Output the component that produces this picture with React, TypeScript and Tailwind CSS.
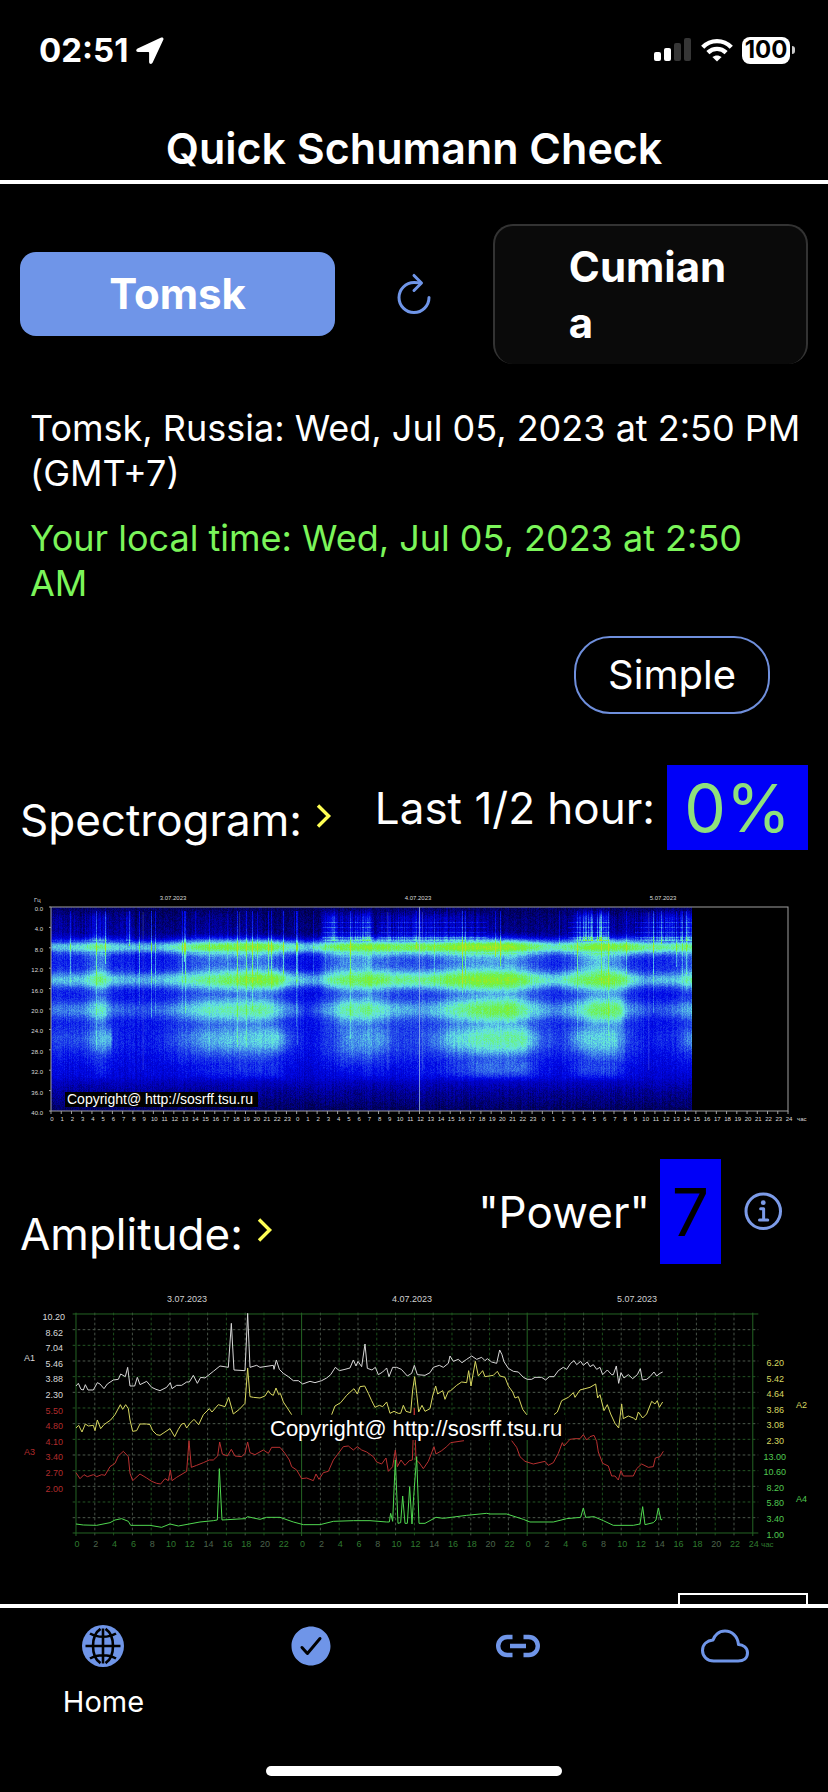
import { IoCheckmarkCircle, IoCloudOutline, IoInformationCircleOutline, IoRefreshOutline } from 'react-icons/io5';

type Knots = [number, number][];
type Band = { freq: number; spread: number; knots: Knots };

// spectrogram plot: 72 hours across, 0-40 Hz down
const PLOT = { x: 31, y: 27, w: 737, h: 204 };
const HOUR = PLOT.w / 72;
const HERTZ = PLOT.h / 40;
const LAST_HOUR = 62.7;

const BANDS: Band[] = [
  {
    freq: 7.8,
    spread: 1,
    knots: [[0, 0.7], [2, 0.76], [4.9, 0.9], [6, 0.77], [8, 0.72], [10, 0.71], [12, 0.82], [15, 0.95], [21.5, 0.97], [23, 0.84], [25, 0.74], [27, 0.87], [28, 0.95], [31, 0.99], [34, 0.94], [37, 0.95], [40, 1.02], [45, 1.03], [47, 0.92], [49, 0.82], [51, 0.9], [53, 1], [56, 0.96], [58, 0.89], [60, 0.86], [63, 0.9]],
  },
  {
    freq: 14.2,
    spread: 1.25,
    knots: [[0, 0.7], [3, 0.75], [4.9, 0.92], [6, 0.74], [9, 0.68], [12, 0.77], [15, 0.88], [19, 0.96], [22, 0.98], [23.5, 0.76], [26, 0.68], [27.5, 0.88], [31, 0.97], [33, 0.9], [36, 0.86], [39, 0.96], [42, 1], [45, 1], [47, 0.87], [49, 0.76], [51, 0.88], [54, 0.99], [55.5, 0.95], [56.5, 0.82], [58, 0.7], [61, 0.74], [63, 0.9]],
  },
  {
    freq: 20.1,
    spread: 1.5,
    knots: [[0, 0.6], [3, 0.65], [5, 0.84], [6, 0.6], [9, 0.54], [12, 0.66], [15, 0.82], [21, 0.86], [23, 0.66], [25, 0.5], [27, 0.66], [28.5, 0.84], [31, 0.88], [33, 0.75], [36, 0.66], [40, 0.87], [42, 0.93], [45, 0.96], [47, 0.78], [49, 0.64], [51, 0.72], [53, 0.92], [55.5, 0.92], [56.2, 0.68], [59, 0.54], [61, 0.62], [63, 0.76]],
  },
  {
    freq: 25.8,
    spread: 1.8,
    knots: [[0, 0.52], [3, 0.55], [5, 0.74], [5.8, 0.7], [6, 0.48], [9, 0.42], [12, 0.54], [15, 0.7], [22, 0.77], [23.5, 0.52], [26, 0.38], [29, 0.67], [32, 0.68], [34, 0.52], [36, 0.52], [39, 0.74], [42, 0.84], [46, 0.86], [48, 0.57], [50, 0.52], [52, 0.74], [55, 0.77], [56.5, 0.52], [58, 0.44], [61, 0.5], [63, 0.72]],
  },
  {
    freq: 31.4,
    spread: 1.9,
    knots: [[0, 0.38], [4, 0.42], [5, 0.5], [6, 0.38], [12, 0.4], [16, 0.48], [22, 0.49], [24, 0.34], [27, 0.38], [31, 0.46], [34, 0.4], [38, 0.46], [42, 0.6], [46, 0.6], [48, 0.42], [50, 0.4], [52, 0.53], [55, 0.53], [56.5, 0.4], [60, 0.36], [63, 0.38]],
  },
];

const FLOOR: Knots = [[0, 0.16], [5, 0.22], [7, 0.34], [10, 0.42], [27, 0.44], [30, 0.4], [33, 0.36], [36, 0.26], [40, 0.16]];

// how busy the 0-6 Hz part is
const HUM: Knots = [[0, 0.06], [3, 0.08], [5, 0.22], [6, 0.02], [7.5, 0.16], [8.2, 0], [12, 0.02], [16, 0.07], [17, 0.04], [24, 0], [26, 0], [27.5, 0.28], [28.5, 0.16], [31, 0.28], [31.6, 0.04], [33, 0.18], [37, 0.16], [42, 0.1], [44, 0.02], [49, 0.02], [50.9, 0.1], [52, 0.32], [54, 0.38], [54.6, 0.06], [57, 0.08], [59, 0.2], [62, 0.24], [63, 0.2]];

const RAMP: [number, number, number, number][] = [
  [0, 0, 0, 20],
  [0.15, 0, 0, 84],
  [0.3, 0, 0, 180],
  [0.42, 0, 8, 232],
  [0.55, 36, 76, 232],
  [0.68, 76, 160, 232],
  [0.78, 100, 228, 224],
  [0.87, 104, 240, 150],
  [0.95, 112, 240, 76],
  [1, 128, 240, 48],
  [1.1, 190, 224, 30],
];

const lerp = (knots: Knots, at: number) => {
  for (let i = 1; i < knots.length; i++) {
    const [x1, y1] = knots[i];
    if (at <= x1) {
      const [x0, y0] = knots[i - 1];
      return y0 + ((y1 - y0) * (at - x0)) / (x1 - x0);
    }
  }
  return knots[knots.length - 1][1];
};

const hash = (a: number, b: number) => {
  const s = Math.sin(a * 127.1 + b * 311.7) * 43758.5453;
  return s - Math.floor(s);
};

const rampColor = (v: number) => {
  for (let i = 1; i < RAMP.length; i++) {
    if (v <= RAMP[i][0]) {
      const [p, ...a] = RAMP[i - 1];
      const [q, ...b] = RAMP[i];
      const t = (v - p) / (q - p);
      return `rgb(${a.map((c, n) => Math.round(c + (b[n] - c) * t)).join(',')})`;
    }
  }
  return 'rgb(190,224,30)';
};

// one path per colour step keeps the node count small
const LEVELS = 44;
function buildSpectrogram() {
  const paths: string[] = Array.from({ length: LEVELS + 1 }, () => '');
  const cols = Math.floor(LAST_HOUR * HOUR);
  for (let c = 0; c < cols; c++) {
    const hour = c / HOUR;
    const jitter = (hash(c, 1) - 0.5) * 0.06;
    const strong = hash(c, 2) > 0.93 ? 0.1 + hash(c, 3) * 0.14 : 0;
    const reach = 5 + hash(c, 4) * 26;
    const hum = lerp(HUM, hour);
    const levels = BANDS.map((b) => lerp(b.knots, hour));
    const activity = levels[2];
    for (let r = 0; r < PLOT.h; r += 1) {
      const freq = r / HERTZ;
      let v = lerp(FLOOR, freq);
      if (freq > 9 && freq < 34) v += Math.max(0, activity - 0.56) * (freq < 28 ? 0.6 : 0.6 - (freq - 28) * 0.1);
      if (freq > 9 && freq < 13) v += hum * 0.25;
      const bg = v;
      BANDS.forEach((b, i) => {
        const d = Math.abs(freq - b.freq) / (b.spread * (0.75 + Math.max(0, levels[i] - 0.6)));
        v = Math.max(v, bg + (levels[i] - bg) * Math.exp(-Math.pow(d, 2.3) / 2));
      });
      if (freq < 6.6) {
        v += hum * (0.35 + hash(c, 7) * 0.9) * Math.min(1, freq / 2);
        if (hour > 26 && hum > 0.08 && r % 5 === 0 && r > 10) v += 0.13;
      }
      if (freq > 0.6 && freq < reach) v += strong * (freq < 13 ? 1.1 : 0.5);
      v += jitter + (hash(c, r + 11) - 0.5) * 0.09;
      if (freq > 34) v = Math.min(v, 0.36);
      const level = Math.max(0, Math.min(LEVELS, Math.round((v / 1.1) * LEVELS)));
      paths[level] += `M${PLOT.x + c} ${PLOT.y + r}h1v1h-1z`;
    }
  }
  return paths.map((d, i) => ({ d, fill: rampColor((i / LEVELS) * 1.1) }));
}

const SPECTRUM = buildSpectrogram();

function Spectrogram() {
  return (
    <svg viewBox="0 0 788 260" className="block w-full font-['Liberation_Sans',sans-serif]" role="img" aria-label="Spectrogram">
      <g shapeRendering="crispEdges">
        {SPECTRUM.map((p, i) => (
          <path key={i} d={p.d} fill={p.fill} />
        ))}
      </g>
      {[32.9, 36, 36.3, 9, 18.4, 58.4].map((h) => (
        <line key={h} x1={PLOT.x + h * HOUR} x2={PLOT.x + h * HOUR} y1={h === 36 ? 27 : 32} y2={h === 36 ? 231 : 190} stroke="#a8c8e8" strokeWidth={h === 36 ? 1 : 0.6} opacity={h === 36 ? 0.7 : 0.4} />
      ))}
      <rect x={PLOT.x} y={PLOT.y} width={PLOT.w} height={PLOT.h} fill="none" stroke="#a0a0a0" />
      <rect x="45" y="212" width="193" height="15" fill="#000" />
      <text x="47" y="224" fontSize="14" fill="#fff">
        Copyright@ http://sosrff.tsu.ru
      </text>
      <g fill="#dcdcdc" fontSize="6">
        <text x="14" y="22">
          Гц
        </text>
        {Array.from({ length: 11 }, (_, i) => (
          <g key={i}>
            <text x="23" y={PLOT.y + 4 + i * 4 * HERTZ} textAnchor="end">
              {(i * 4).toFixed(1)}
            </text>
            <path d={`M${PLOT.x - 2} ${PLOT.y + i * 4 * HERTZ}h2`} stroke="#a0a0a0" />
          </g>
        ))}
        {Array.from({ length: 73 }, (_, i) => (
          <g key={i}>
            <text x={PLOT.x + 1 + i * HOUR} y="241" textAnchor="middle">
              {i === 72 ? 24 : i % 24}
            </text>
            <path d={`M${PLOT.x + i * HOUR} 231v3`} stroke="#a0a0a0" />
          </g>
        ))}
        <text x="777" y="241">
          час
        </text>
        {['3.07.2023', '4.07.2023', '5.07.2023'].map((day, i) => (
          <text key={day} x={153 + i * 245} y="20" textAnchor="middle">
            {day}
          </text>
        ))}
      </g>
    </svg>
  );
}

// recorded traces, three units to a pixel
const A1 =
  'M228 318 235 310 243 328 250 330 256 314 264 330 280 330 292 308 300 312 312 326 322 312 340 300 355 298 362 282 376 290 383 262 390 318 404 318 412 292 420 314 440 304 455 322 468 328 480 332 500 322 511 308 516 326 530 316 545 316 560 306 568 306 580 286 592 310 602 292 615 294 640 274 660 258 685 262 694 130 702 270 735 272 743 100 750 262 770 256 780 262 820 256 822 268 829 240 838 268 850 280 865 290 880 302 895 302 908 312 930 304 945 308 965 302 980 294 992 284 1006 262 1018 272 1035 268 1050 264 1060 240 1068 258 1074 244 1085 260 1095 192 1102 265 1116 270 1126 262 1135 284 1148 276 1160 264 1167 290 1178 262 1190 262 1204 268 1222 288 1235 280 1243 256 1252 284 1275 286 1290 278 1300 262 1318 256 1330 262 1345 250 1350 228 1360 244 1375 238 1386 248 1400 238 1415 228 1430 238 1445 232 1455 242 1462 236 1475 246 1490 250 1499 210 1506 224 1512 245 1525 265 1540 274 1555 276 1570 292 1582 298 1595 298 1605 292 1625 292 1637 300 1648 290 1662 290 1675 272 1690 262 1700 268 1712 250 1722 242 1730 254 1742 244 1750 256 1762 246 1770 260 1780 254 1790 268 1800 262 1808 284 1822 270 1835 284 1840 284 1849 258 1856 310 1863 278 1872 294 1885 284 1898 296 1912 284 1921 266 1927 300 1940 298 1950 290 1962 276 1970 288 1980 280 1988 276';
const A2 =
  'M228 444 236 436 246 456 256 432 265 438 280 436 285 452 292 420 302 446 312 434 332 420 345 404 361 374 368 388 377 374 385 386 390 420 398 454 410 452 420 432 440 432 450 434 458 452 470 464 480 466 495 456 510 446 524 470 535 448 545 432 553 430 560 444 570 430 582 418 596 434 610 404 628 386 636 396 655 374 675 380 686 352 700 402 718 388 735 370 743 264 750 350 760 352 780 354 795 348 805 332 812 342 820 346 828 324 836 344 841 340 850 366 862 384 875 404M995 404 1005 378 1022 368 1040 346 1062 326 1072 342 1080 320 1094 318 1105 340 1115 362 1125 382 1138 376 1148 380 1160 366 1170 400 1182 394 1195 400 1202 400 1210 376 1218 394 1232 398 1238 330 1244 290 1250 340 1256 396 1266 376 1275 394 1290 386 1298 348 1307 318 1313 342 1328 332 1335 358 1345 334 1352 332 1370 316 1385 306 1400 308 1406 272 1413 318 1426 244 1435 288 1448 272 1455 290 1480 286 1492 274 1500 288 1515 292 1525 318 1538 336 1545 354 1555 350 1568 388 1580 404M1662 404 1672 396 1685 362 1705 352 1720 338 1725 352 1740 330 1770 322 1787 312 1793 354 1800 344 1812 392 1822 374 1832 402 1845 430 1856 444 1865 372 1870 416 1885 408 1900 414 1908 420 1915 396 1928 414 1940 402 1955 364 1965 372 1972 362 1978 382 1988 366';
const A3 =
  'M228 578 240 596 252 584 262 590 280 584 290 590 305 584 315 586 330 560 345 550 355 528 370 514 385 530 390 580 398 602 420 582 440 594 455 604 470 610 482 612 495 596 505 602 511 570 516 602 530 592 560 574 567 482 574 562 590 556 610 548 628 540 640 540 653 528 659 486 667 522 682 528 694 508 705 528 725 530 735 520 743 486 750 518 765 524 790 510 805 520 815 502 840 502 855 520 868 540 875 560 890 570 905 596 920 594 940 602 948 582 957 598 970 578 985 574 1000 540 1012 524 1030 500 1045 498 1060 510 1072 500 1085 510 1100 516 1120 530 1130 546 1145 552 1158 534 1165 574 1178 560 1186 510 1192 560 1203 540 1215 556 1228 542 1237 540 1243 384 1248 540 1256 546 1270 566 1285 544 1302 500 1308 522 1325 512 1340 500 1352 488 1392 482M1535 482 1550 502 1560 530 1575 544 1600 552 1635 544 1645 556 1660 548 1675 520 1687 488 1692 498 1710 478 1725 476 1740 476 1750 464 1760 480 1770 470 1782 466 1790 484 1795 516 1808 550 1825 558 1835 588 1845 588 1855 600 1863 572 1870 588 1900 588 1910 566 1925 552 1945 562 1960 560 1966 534 1980 530 1990 514';
const A4 =
  'M228 732 250 735 290 736 330 728 345 720 365 716 385 724 392 736 450 736 485 742 510 732 535 738 600 726 640 722 652 720 658 566 666 720 735 716 743 710 760 714 780 718 800 712 840 712 880 726 910 734 960 734 1000 724 1060 722 1110 722 1160 726 1168 726 1172 700 1178 724 1186 540 1194 730 1202 728 1208 648 1215 730 1222 730 1229 620 1236 732 1241 650 1250 530 1257 730 1275 730 1308 712 1330 715 1400 706 1460 700 1470 702 1520 702 1570 718 1590 726 1660 726 1700 716 1742 712 1750 684 1757 712 1782 710 1810 722 1840 736 1900 736 1920 732 1928 680 1935 734 1960 728 1968 720 1975 684 1983 720 1987 718';

const LEFT_SCALE = ['10.20', '8.62', '7.04', '5.46', '3.88', '2.30', '5.50', '4.80', '4.10', '3.40', '2.70', '2.00'];
const RIGHT_SCALE = ['6.20', '5.42', '4.64', '3.86', '3.08', '2.30', '13.00', '10.60', '8.20', '5.80', '3.40', '1.00'];

function AmplitudeChart() {
  return (
    <svg viewBox="0 0 788 290" className="block w-full font-['Liberation_Sans',sans-serif]" role="img" aria-label="Amplitude">
      <g transform="translate(-20 0) scale(0.33333)" fill="none" strokeWidth="3" strokeLinejoin="round">
        {Array.from({ length: 13 }, (_, i) => (
          <path key={i} d={`M218 ${149 + i * 47}H2275`} stroke={i % 2 ? '#245624' : '#4c584c'} strokeDasharray="8 7" />
        ))}
        {Array.from({ length: 37 }, (_, i) =>
          i % 12 === 0 ? (
            <path key={i} d={`M${228 + i * 56.4} 98V768`} stroke="#246424" />
          ) : (
            <path key={i} d={`M${228 + i * 56.4} 98V768`} stroke={i % 2 ? '#465046' : '#1c4e1c'} strokeDasharray="8 7" />
          )
        )}
        <path d="M218 102H2275M218 759H2275" stroke="#246424" />
        <path d={A3} stroke="#b83030" />
        <path d={A4} stroke="#50d850" />
        <path d={A2} stroke="#d8d860" />
        <path d={A1} stroke="#d8d8d8" />
      </g>
      <rect x="250" y="135" width="295" height="25" fill="#000" />
      <text x="250" y="156" fontSize="22" fill="#fff">
        Copyright@ http://sosrff.tsu.ru
      </text>
      <g fontSize="9">
        {['3.07.2023', '4.07.2023', '5.07.2023'].map((day, i) => (
          <text key={day} x={167 + i * 225} y="22" textAnchor="middle" fill="#d0d0d0">
            {day}
          </text>
        ))}
        {LEFT_SCALE.map((v, i) => (
          <text key={i} x={i ? 43 : 45} y={40 + i * 15.6} textAnchor="end" fill={i < 6 ? '#d8d8d8' : '#b02c2c'}>
            {v}
          </text>
        ))}
        {RIGHT_SCALE.map((v, i) => (
          <text key={i} x={i === 6 || i === 7 ? 766 : 764} y={86 + i * 15.6} textAnchor="end" fill={i < 6 ? '#d8d860' : '#50c850'}>
            {v}
          </text>
        ))}
        <text x="4" y="81" fill="#d8d8d8">
          A1
        </text>
        <text x="4" y="175" fill="#b02c2c">
          A3
        </text>
        <text x="776" y="128" fill="#d8d860">
          A2
        </text>
        <text x="776" y="222" fill="#50c850">
          A4
        </text>
        {Array.from({ length: 37 }, (_, i) => (
          <text key={i} x={57 + i * 18.8} y="267" textAnchor="middle" fill={i % 3 === 1 ? '#4c644c' : '#2f7a2f'}>
            {i === 36 ? 24 : (i * 2) % 24}
          </text>
        ))}
        <text x="741" y="267" fill="#2f7a2f" fontSize="8">
          час
        </text>
      </g>
    </svg>
  );
}

function Chevron() {
  return (
    <svg viewBox="0 0 16 24" className="mb-2 h-6 w-4" fill="none" stroke="#ffff54" strokeWidth="3.4">
      <path d="M2 1.5 12.6 12 2 22.5" />
    </svg>
  );
}

function GlobeIcon() {
  return (
    <svg viewBox="0 0 42 42" className="size-[42px]">
      <circle cx="21" cy="21" r="21" fill="#6f95e8" />
      <g fill="none" stroke="#000" strokeWidth="2.6">
        <path d="M21 3.5v35M3.500 21h35M8 8.500c7.500 4.400 18.500 4.400 26 0M8 33.500c7.500-4.400 18.500-4.400 26 0" />
        <path d="M18.500 3.800c-10 6.500-10 28 0 34.400M23.500 3.800c10 6.500 10 28 0 34.400" />
      </g>
    </svg>
  );
}

function LinkIcon() {
  return (
    <svg viewBox="0 0 44 24" className="h-6 w-11" fill="none" stroke="currentColor" strokeWidth="4.4">
      <path d="M16.500 3h-5.300a9 9 0 0 0 0 18h5.300M27.500 3h5.300a9 9 0 0 1 0 18h-5.300M14 12h16" />
    </svg>
  );
}

function StatusBar() {
  return (
    <div className="flex h-[100px] items-center justify-between pr-[33px] pl-[39px]">
      <div className="flex items-center gap-2">
        <span className="text-[33px] leading-10 font-bold">02:51</span>
        <svg viewBox="0 0 28 27" className="h-[27px] w-7" fill="#fff">
          <path d="M25.2.6 1.6 11.4C-.5 12.4-.1 15 2 15h10.400c.5 0 .7.2.7.7V25c0 2.200 2.700 2.600 3.600.6L27.300 2.800C28 1.200 26.800-.1 25.200.6z" />
        </svg>
      </div>
      <div className="flex items-center gap-[9px]">
        <svg viewBox="0 0 38 24" className="h-6 w-[38px]" fill="#fff">
          <rect x="0" y="14" width="7" height="9" rx="2" />
          <rect x="10" y="10" width="7" height="13" rx="2" />
          <rect x="20" y="5" width="7" height="18" rx="2" fill="#363636" />
          <rect x="30" y="0" width="7" height="23" rx="2" fill="#363636" />
        </svg>
        <svg viewBox="0 0 32 24" className="h-6 w-8" fill="none" stroke="#fff" strokeWidth="4.4">
          <path d="M1.7 9.3c8-8.2 20.6-8.2 28.6 0" />
          <path d="M6.9 14.6c5.2-5 13-5 18.2 0" />
          <path d="M16 23.6l-4.6-4.5c2.6-2.3 6.6-2.3 9.2 0z" fill="#fff" stroke="none" />
        </svg>
        <div className="flex items-center gap-0.5">
          <span className="flex h-[27px] w-12 items-center justify-center rounded-lg bg-white text-2xl leading-none font-bold text-black">100</span>
          <span className="h-2 w-[3px] rounded-r-full bg-[#c8c8c8]" />
        </div>
      </div>
    </div>
  );
}

export default function App() {
  return (
    <div className="flex h-screen flex-col bg-black font-['Inter',sans-serif] text-white">
      <header className="shrink-0 border-b-4 border-white">
        <StatusBar />
        <h1 className="pt-4 text-center text-[43px] leading-[64px] font-semibold">Quick Schumann Check</h1>
      </header>

      <main className="min-h-0 flex-1 overflow-y-auto px-5 pt-10 [scrollbar-width:none]">
        <div className="flex items-center justify-between">
          <button className="h-[84px] w-2/5 rounded-2xl bg-[#6f95e8] text-[42px] leading-[56px] font-bold">Tomsk</button>
          <button aria-label="Refresh" className="text-[#6f95e8]">
            <IoRefreshOutline className="size-12" />
          </button>
          <button className="h-[140px] w-2/5 rounded-[20px] border-2 border-b-0 border-[#333] bg-[#0a0a0a] px-[74px] text-left text-[42px] leading-[56px] font-bold break-all">
            Cumiana
          </button>
        </div>

        <section className="mt-[42px] pr-1.5 pl-2.5 text-[36px] leading-[45px]">
          <p>Tomsk, Russia: Wed, Jul 05, 2023 at 2:50 PM (GMT+7)</p>
          <p className="mt-5 text-[#7bf55a]">Your local time: Wed, Jul 05, 2023 at 2:50 AM</p>
        </section>

        <div className="mt-[30px] flex justify-end pr-[38px]">
          <button className="h-[78px] rounded-[36px] border-2 border-[#6f8fdc] px-8 text-[40px] leading-[56px]">Simple</button>
        </div>

        <section className="mt-[51px]">
          <div className="flex items-center justify-between">
            <h2 className="flex items-center gap-3.5 pt-6 text-[44px] leading-[56px]">
              Spectrogram: <Chevron />
            </h2>
            <div className="flex items-center gap-3 text-[44px] leading-[56px]">
              <span>Last 1/2 hour:</span>
              <span className="flex h-[85px] w-[141px] items-center justify-center bg-[#0000f8] text-[66px] text-[#8fe07c]">0%</span>
            </div>
          </div>
          <div className="mt-[30px]">
            <Spectrogram />
          </div>
        </section>

        <section className="mt-[19px]">
          <div className="flex items-center justify-between">
            <h2 className="flex items-center gap-3.5 pt-11 text-[44px] leading-[56px]">
              Amplitude: <Chevron />
            </h2>
            <div className="flex items-center text-[44px] leading-[56px]">
              <span>"Power"</span>
              <span className="ml-2.5 flex h-[105px] w-[61px] items-center justify-center bg-[#0000f8] text-[66px] text-black">7</span>
              <button aria-label="About power" className="mr-5 ml-[19px] text-[#7c9be8]">
                <IoInformationCircleOutline className="size-12" />
              </button>
            </div>
          </div>
          <div className="mt-4">
            <AmplitudeChart />
          </div>
        </section>

        <div className="mt-[23px] flex justify-end">
          <div className="h-[70px] w-[130px] border-2 border-white" />
        </div>
      </main>

      <nav className="shrink-0 border-t-4 border-white pt-3 pb-4 text-[#6f95e8]">
        <div className="grid h-[146px] grid-cols-4 items-start justify-items-center">
          <a href="#home" className="flex flex-col items-center">
            <span className="flex h-[52px] items-center">
              <GlobeIcon />
            </span>
            <span className="mt-2.5 text-[29px] leading-10 text-white">Home</span>
          </a>
          <a href="#status" aria-label="Status" className="flex h-[52px] items-center">
            <IoCheckmarkCircle className="size-12" />
          </a>
          <a href="#links" aria-label="Links" className="flex h-[52px] items-center">
            <LinkIcon />
          </a>
          <a href="#weather" aria-label="Weather" className="flex h-[52px] items-center">
            <IoCloudOutline className="size-12" />
          </a>
        </div>
        <div className="mx-auto h-2.5 w-[296px] rounded-full bg-white" />
      </nav>
    </div>
  );
}
